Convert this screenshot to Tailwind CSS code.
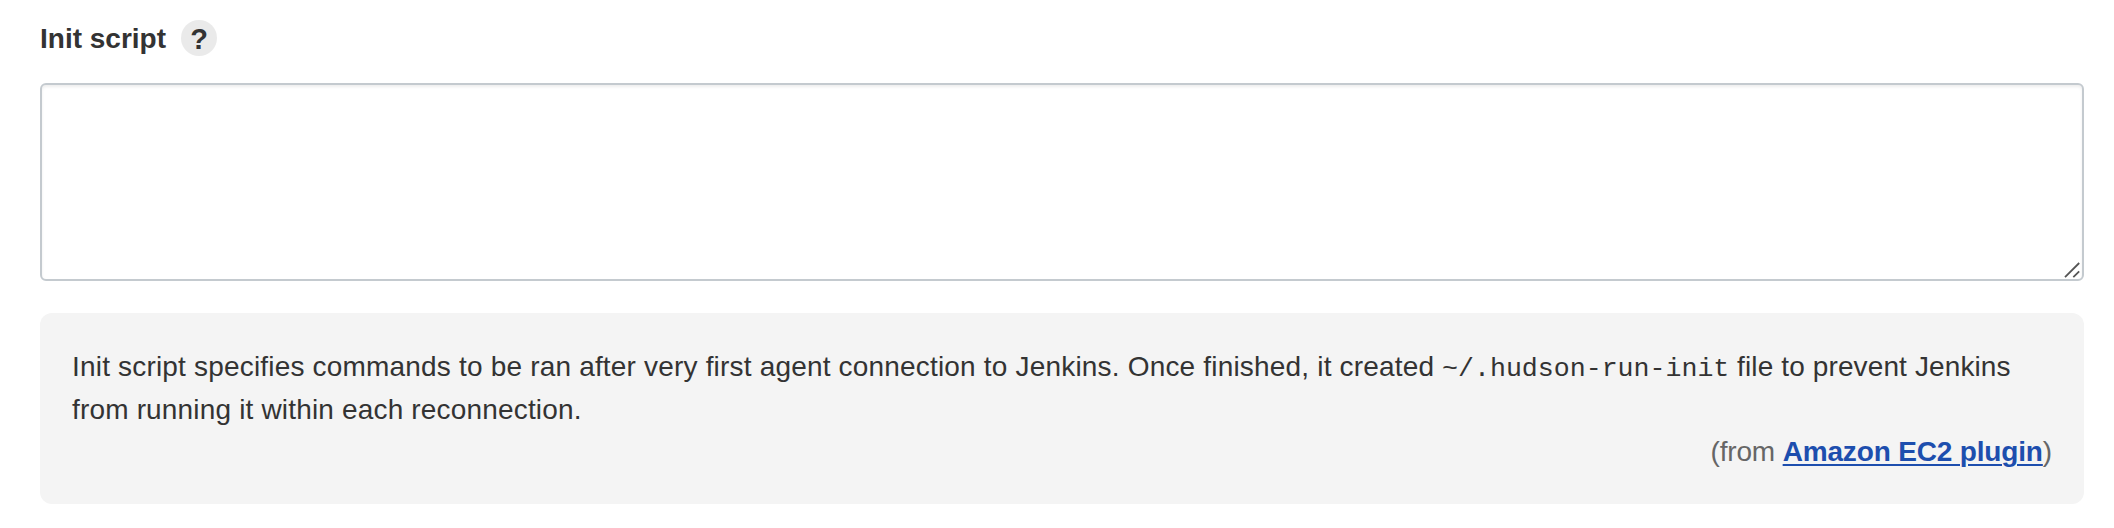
<!DOCTYPE html>
<html lang="en">
<head>
<meta charset="utf-8">
<title>Init script</title>
<script src="https://cdn.jsdelivr.net/npm/@tailwindcss/browser@4"></script>
</head>
<body class="bg-white font-['Liberation_Sans',sans-serif] text-[28px] text-[#333333]">
<main class="flex h-[528px] flex-col px-[40px] pr-[30px] pt-[20px]">
  <div class="flex h-9 items-center gap-[15px]">
    <label for="init" class="block w-[126px] whitespace-nowrap pt-px text-[28px] leading-9 font-bold">Init script</label>
    <button class="flex size-9 items-center justify-center rounded-full bg-[#eaeaea] pt-px text-[29px] leading-9 font-bold">?</button>
  </div>
  <div class="relative mt-[27px] h-[198px]">
    <textarea id="init" class="block h-full w-full resize-none rounded-[6px] border-2 border-[#c4cacf] bg-white shadow-[inset_0_2px_3px_rgba(0,0,0,0.07)]"></textarea>
    <svg class="absolute right-[4px] bottom-[3px]" width="16" height="16" viewBox="0 0 16 16" fill="none" stroke="#555" stroke-width="1.8"><path d="M1 15.2L15.2 1M9.3 15.2L15.2 9.3"/></svg>
  </div>
  <section class="mt-8 h-[191px] rounded-[12px] bg-[#f4f4f4] px-8 pt-[33px]">
    <p class="whitespace-nowrap leading-[42.7px]"><span class="tracking-[0.185px]">Init script specifies commands to be ran after very first agent connection to Jenkins. Once finished, it created</span> <code class="font-['Liberation_Mono',monospace] text-[26.6px] leading-none">~/.hudson-run-init</code> <span class="tracking-[0.12px]">file to prevent Jenkins</span><br><span class="tracking-[0.17px]">from running it within each reconnection.</span></p>
    <p class="text-right leading-[42px] tracking-[-0.16px] text-[#666666]">(from <a class="font-bold text-[#1d4eae] underline decoration-2 underline-offset-[3px]">Amazon EC2 plugin</a>)</p>
  </section>
</main>
</body>
</html>
